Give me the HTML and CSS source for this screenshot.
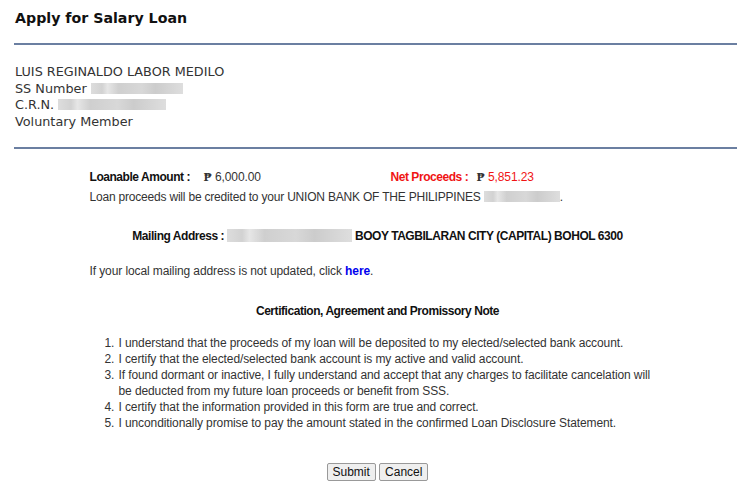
FILE: index.html
```html
<!DOCTYPE html>
<html lang="en">
<head>
  <meta charset="UTF-8" />
  <title>Apply for Salary Loan</title>
  <link rel="stylesheet" href="styles.css">
</head>
<body>

  <div class="page">
    <h1 class="page-title">Apply for Salary Loan</h1>
    <div class="rule"></div>

    <div class="member-info">
      <div>LUIS REGINALDO LABOR MEDILO</div>
      <div>SS Number <span class="blur blur-ss"></span></div>
      <div>C.R.N. <span class="blur blur-crn"></span></div>
      <div>Voluntary Member</div>
    </div>
    <div class="rule"></div>

    <div class="loan-form">
      <div class="amounts">
        <span class="label loanable-label">Loanable Amount :</span>
        <span class="amount loanable-value"><span class="peso">&#8369;</span> 6,000.00</span>
        <span class="label net-label">Net Proceeds :</span>
        <span class="amount net-value"><span class="peso">&#8369;</span> 5,851.23</span>
      </div>

      <p class="credit-note">Loan proceeds will be credited to your UNION BANK OF THE PHILIPPINES <span class="blur blur-acct"></span>.</p>

      <p class="mailing">Mailing Address : <span class="blur blur-addr"></span> BOOY TAGBILARAN CITY (CAPITAL) BOHOL 6300</p>

      <p class="update-note">If your local mailing address is not updated, click <a href="#" class="link">here</a>.</p>

      <h2 class="cert-title">Certification, Agreement and Promissory Note</h2>

      <ol class="cert-list">
        <li>I understand that the proceeds of my loan will be deposited to my elected/selected bank account.</li>
        <li>I certify that the elected/selected bank account is my active and valid account.</li>
        <li>If found dormant or inactive, I fully understand and accept that any charges to facilitate cancelation will be deducted from my future loan proceeds or benefit from SSS.</li>
        <li>I certify that the information provided in this form are true and correct.</li>
        <li>I unconditionally promise to pay the amount stated in the confirmed Loan Disclosure Statement.</li>
      </ol>

      <div class="actions">
        <button class="btn">Submit</button>
        <button class="btn">Cancel</button>
      </div>
    </div>
  </div>

</body>
</html>
```

FILE: styles.css
```css
* {
  box-sizing: border-box;
  margin: 0;
  padding: 0;
}

body {
  background: #fff;
  font-family: "DejaVu Sans", Verdana, sans-serif;
  color: #333;
}

.page {
  padding: 9px 13px 0 14px;
}

.page-title {
  font-size: 14.2px;
  line-height: 18px;
  font-weight: bold;
  color: #111;
  padding-left: 1px;
}

.rule {
  height: 2px;
  background: #6b7fa1;
  margin-top: 16px;
}

.member-info {
  margin-top: 19px;
  padding-left: 1px;
  font-size: 12.8px;
  line-height: 16.7px;
  color: #333;
}

.member-info + .rule {
  margin-top: 16px;
}

.blur {
  display: inline-block;
  height: 11px;
  vertical-align: -1px;
  background: linear-gradient(90deg, #ddd 0, #d2d2d2 12%, #e6e6e6 18%, #cfcfcf 30%, #d8d8d8 55%, #cccccc 70%, #dedede 100%);
  filter: blur(0.6px);
}

.blur-ss {
  width: 92px;
}

.blur-crn {
  width: 108px;
}

.loan-form {
  width: 580px;
  margin: 0 auto;
  font-family: "Liberation Sans", Arial, sans-serif;
  font-size: 12px;
  letter-spacing: -0.1px;
  line-height: 16px;
  color: #333;
  padding-left: 4px;
}

.amounts {
  display: flex;
  margin-top: 20px;
}

.label {
  font-weight: bold;
  letter-spacing: -0.45px;
  color: #111;
}

.loanable-label {
  width: 114px;
}

.loanable-value {
  width: 187px;
}

.net-label {
  width: 86px;
  color: #f01414;
}

.net-value {
  color: #f01414;
}

.peso {
  font-family: "DejaVu Serif", serif;
  font-weight: bold;
  font-size: 10.5px;
  color: #333;
}

.credit-note {
  margin-top: 4px;
  letter-spacing: -0.2px;
}

.blur-acct {
  width: 76px;
}

.mailing {
  margin-top: 23px;
  text-align: center;
  font-weight: bold;
  letter-spacing: -0.45px;
  color: #111;
}

.blur-addr {
  width: 125px;
  height: 13px;
  vertical-align: -2px;
}

.update-note {
  margin-top: 19px;
}

.link {
  color: #0000ee;
  font-weight: bold;
  text-decoration: none;
}

.cert-title {
  margin-top: 24px;
  text-align: center;
  font-size: 12px;
  line-height: 16px;
  font-weight: bold;
  letter-spacing: -0.45px;
  color: #111;
}

.cert-list {
  margin-top: 16px;
  padding-left: 28px;
}

.cert-list li {
  padding-left: 1px;
}

.actions {
  margin-top: 32px;
  text-align: center;
}

.btn {
  font-family: "Liberation Sans", Arial, sans-serif;
  font-size: 12px;
  letter-spacing: 0;
  line-height: 14px;
  padding: 1px 5px;
  color: #111;
  background: #efefef;
  border: 1px solid #999;
  border-radius: 2px;
}
```
